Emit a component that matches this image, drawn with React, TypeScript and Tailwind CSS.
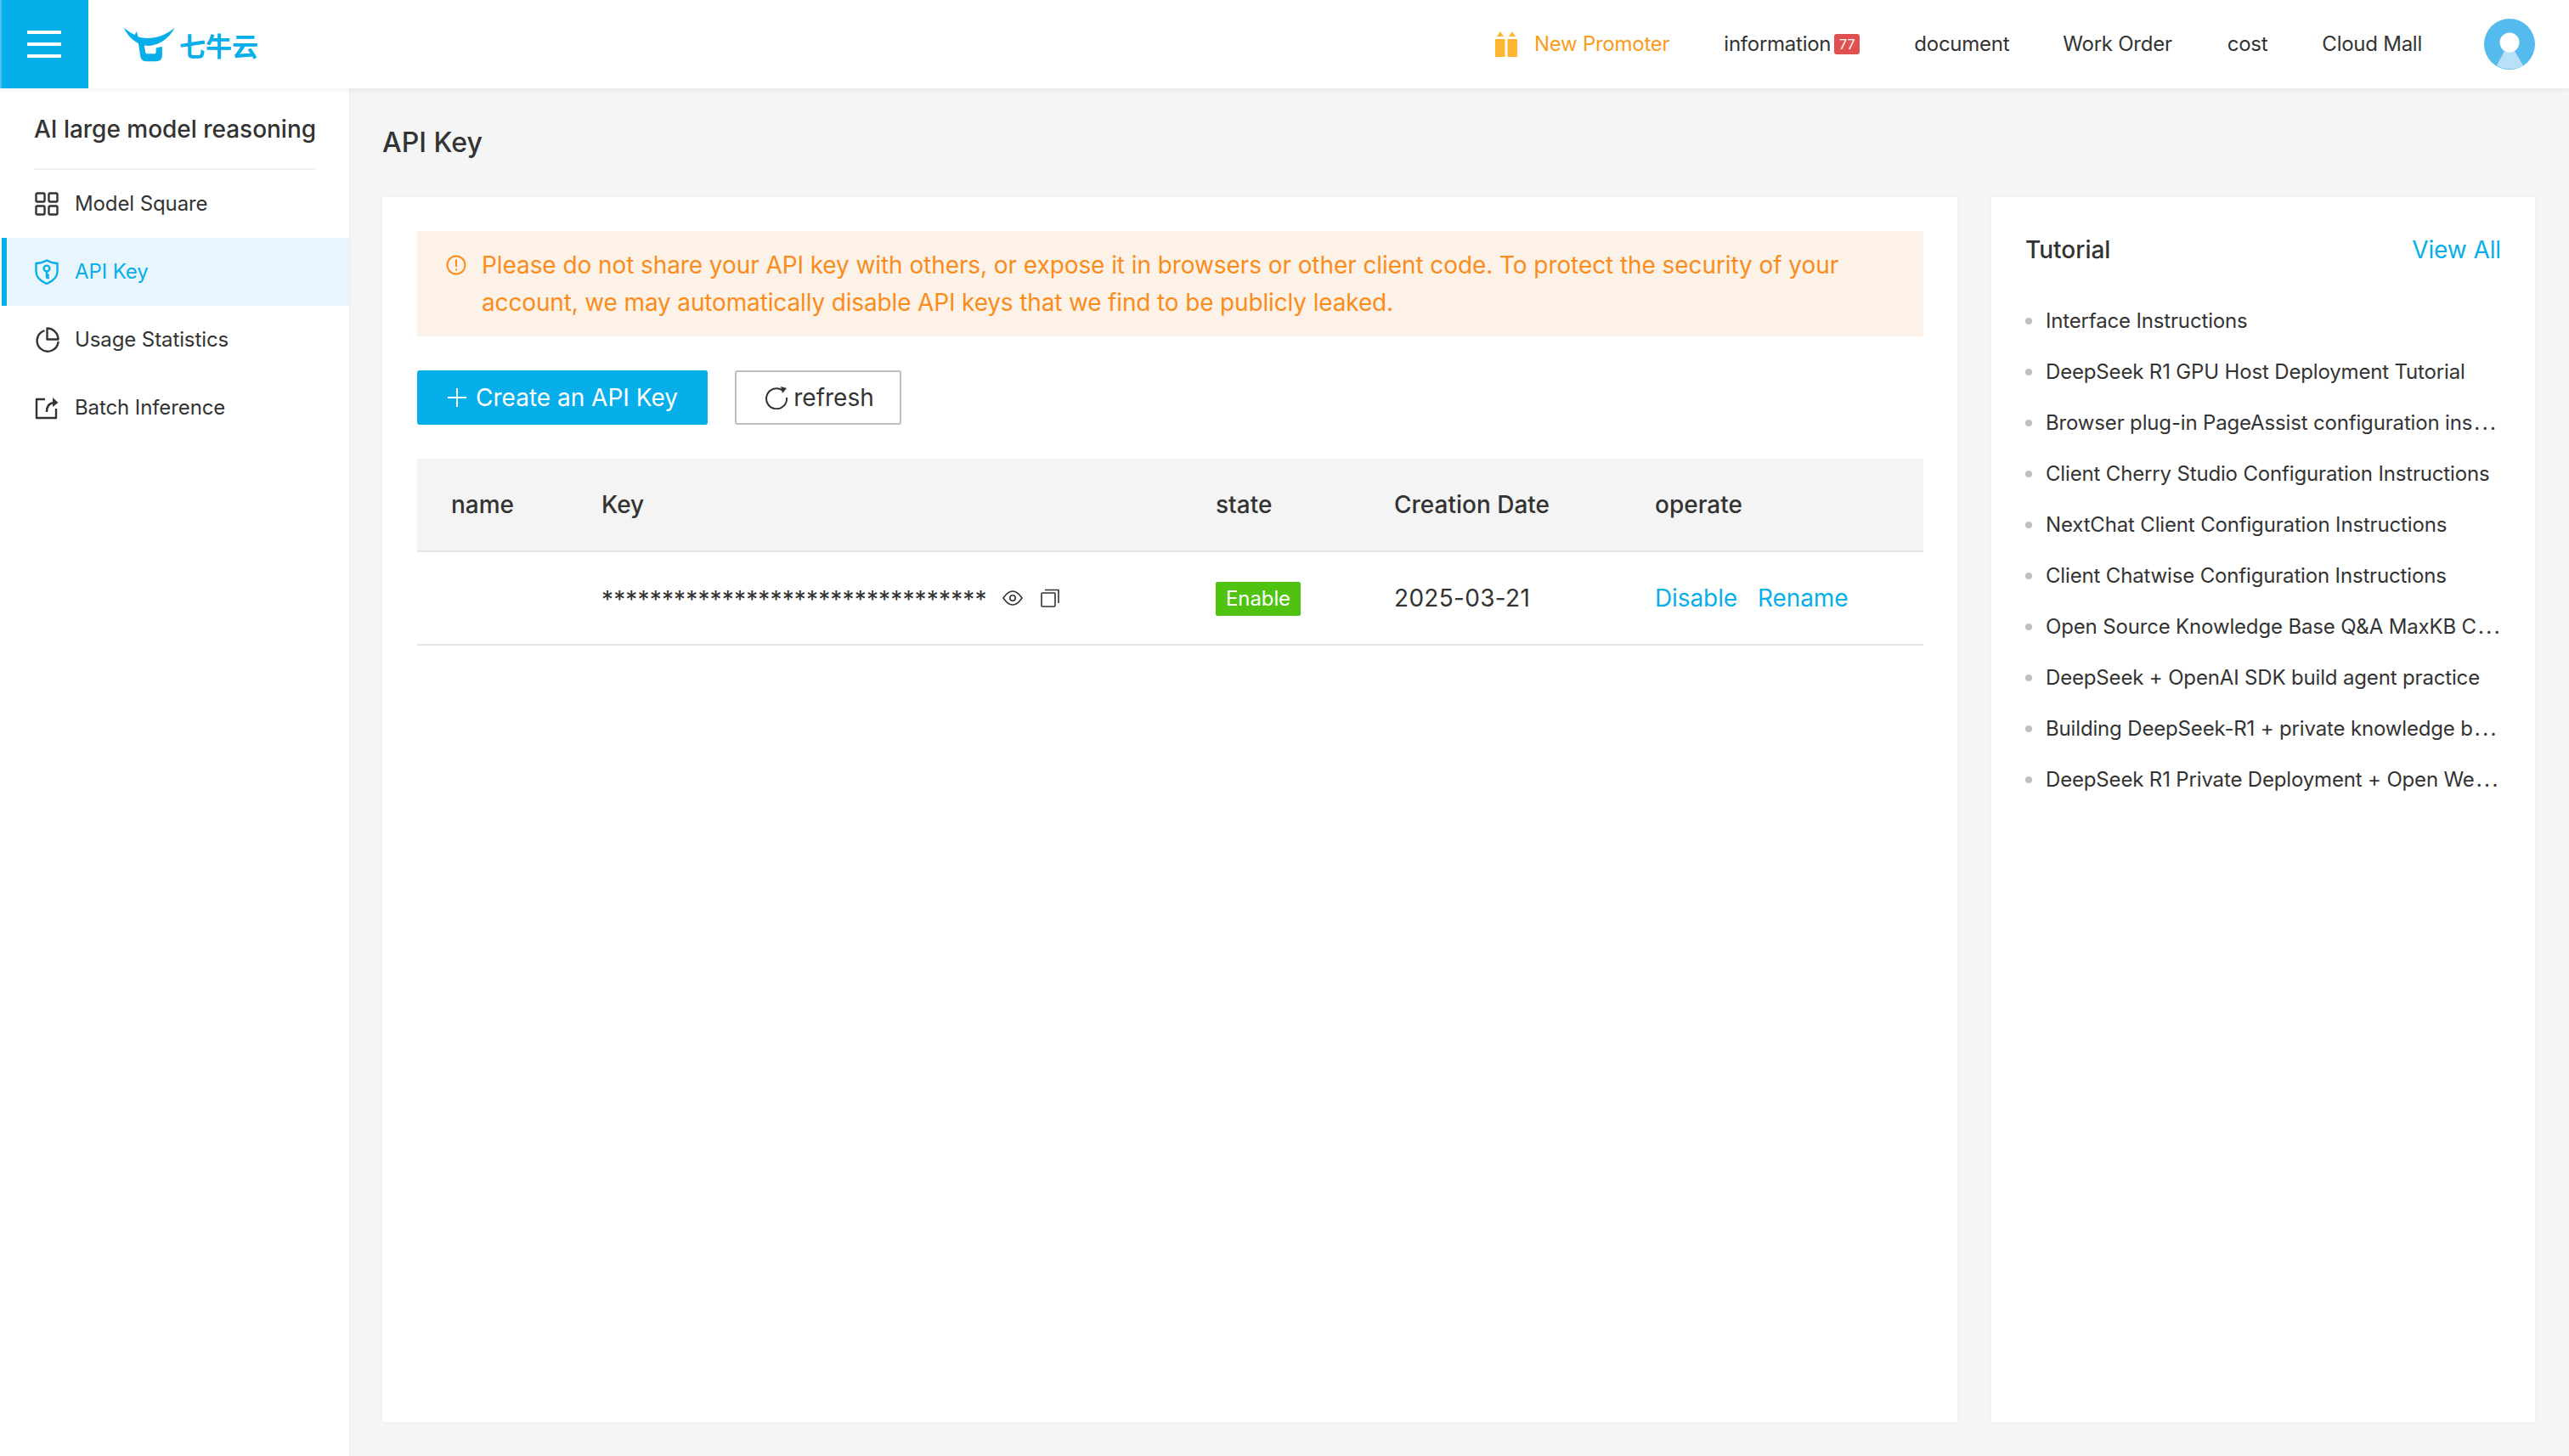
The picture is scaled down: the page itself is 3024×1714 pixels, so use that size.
import React from "react";

const font = "font-['Inter','Noto_Sans_CJK_SC',sans-serif]";

function Logo() {
  return (
    <div className="ml-[39px] flex items-end">
      <svg width="66" height="45" viewBox="430 85 200 135" className="shrink-0">
        <path fill="#06aeea" d="M438 92C452 104 465 112 478 118L483 105L490 125C520 134 575 132 620 92C600 130 570 152 530 157C490 158 455 130 438 92Z" />
        <path fill="#06aeea" d="M490 145L497 192C499 205 505 212 518 212L552 212C567 212 575 205 575 192L575 160C568 160 560 163 553 165L553 178C553 183 551 185 546 185L522 185C518 185 516 183 515 178L511 150Z" />
      </svg>
      <span className="mb-[2px] ml-[2px] text-[31px] leading-[40px] font-bold text-[#06aeea] font-['Noto_Sans_CJK_SC',sans-serif]">七牛云</span>
    </div>
  );
}

function Gift() {
  return (
    <svg width="26" height="30" viewBox="0 0 26 30" className="shrink-0">
      <path fill="#ffb62e" d="M0 9V30H11.5V9ZM14.5 9V30H26V9ZM2 6L6 0L10 6ZM16 6L20 0L24 6Z" />
    </svg>
  );
}

function Avatar() {
  return (
    <svg width="60" height="60" viewBox="0 0 60 60" className="shrink-0">
      <circle cx="30" cy="30" r="30" fill="#55bbef" />
      <path fill="#b8e0f7" d="M24 38H36L46 55A30 30 0 0 1 15 55Z" />
      <circle cx="30" cy="28" r="11.5" fill="#ffffff" />
    </svg>
  );
}

function Nav({ children, className }: { children: React.ReactNode; className: string }) {
  return <span className={`text-[24px] leading-[32px] tracking-[-0.25px] text-[#333] ${className}`}>{children}</span>;
}

function Header() {
  return (
    <header className="relative z-10 flex h-[104px] shrink-0 items-center bg-white shadow-[0_2px_6px_rgba(0,0,0,0.06)]">
      <div className="flex h-[104px] w-[104px] shrink-0 flex-col items-center justify-center gap-[10px] border-l-2 border-[#4dbfec] bg-[#06aeea] pr-[2px]">
        <div className="h-[4px] w-[40px] bg-white" />
        <div className="h-[4px] w-[40px] bg-white" />
        <div className="h-[4px] w-[40px] bg-white" />
      </div>
      <Logo />
      <div className="ml-auto flex items-center pr-[40px]">
        <Gift />
        <span className="ml-[20px] text-[24px] leading-[32px] tracking-[-0.25px] text-[#fa9b1b]">New Promoter</span>
        <Nav className="ml-[64px]">information</Nav>
        <span className="ml-[4px] flex h-[24px] w-[30px] items-center justify-center rounded-[3px] bg-[#e05050] text-[16px] leading-[24px] text-white">77</span>
        <Nav className="ml-[64px]">document</Nav>
        <Nav className="ml-[63px]">Work Order</Nav>
        <Nav className="ml-[65px]">cost</Nav>
        <Nav className="ml-[64px]">Cloud Mall</Nav>
        <div className="ml-[73px]"><Avatar /></div>
      </div>
    </header>
  );
}

function GridIcon() {
  return (
    <svg width="28" height="28" viewBox="0 0 28 28" fill="none" stroke="#333" strokeWidth="2.4">
      <rect x="1.5" y="1.5" width="10" height="10" rx="1.5" />
      <rect x="16.5" y="1.5" width="10" height="10" rx="1.5" />
      <rect x="1.5" y="16.5" width="10" height="10" rx="1.5" />
      <rect x="16.5" y="16.5" width="10" height="10" rx="1.5" />
    </svg>
  );
}
function ShieldIcon() {
  return (
    <svg width="28" height="30" viewBox="0 0 28 30" fill="none" stroke="#06aeea" strokeWidth="2.4">
      <path d="M14 1.5C17.5 3.5 22 5 26.5 5V15C26.5 21.5 21 26 14 29C7 26 1.5 21.5 1.5 15V5C6 5 10.5 3.5 14 1.5Z" strokeLinejoin="round" />
      <circle cx="14" cy="11" r="3.4" />
      <path d="M14 14.5V22.5M14 19H17M14 22H17" />
    </svg>
  );
}
function PieIcon() {
  return (
    <svg width="30" height="30" viewBox="0 0 30 30" fill="none" stroke="#333" strokeWidth="2.4">
      <path d="M11.5 4.5A12.5 12.5 0 1 0 28.5 18" strokeLinecap="round" />
      <path d="M15.5 1.5A13 13 0 0 1 28.5 14.5H15.5Z" strokeLinejoin="round" />
    </svg>
  );
}
function ExportIcon() {
  return (
    <svg width="28" height="28" viewBox="0 0 28 28" fill="none" stroke="#333" strokeWidth="2.4">
      <path d="M12 4H2V26H25V15" strokeLinejoin="round" />
      <path d="M14 19C14 12 17 8 24 8" />
      <path fill="#333" stroke="none" d="M21 2L27.5 8L21 13Z" />
    </svg>
  );
}

function SideItem({ icon, label, active }: { icon: React.ReactNode; label: string; active?: boolean }) {
  return (
    <div className={active ? "ml-[2px] flex h-[80px] items-center border-l-[6px] border-[#06aeea] bg-[#e9f5fc] pl-[32px]" : "flex h-[80px] items-center pl-[40px]"}>
      <span className="flex w-[30px] justify-center">{icon}</span>
      <span className={active ? "ml-[18px] text-[24px] leading-[32px] tracking-[-0.1px] text-[#06aeea]" : "ml-[18px] text-[24px] leading-[32px] tracking-[-0.1px] text-[#333]"}>{label}</span>
    </div>
  );
}

function Sidebar() {
  return (
    <aside className="w-[411px] shrink-0 bg-white shadow-[1px_0_3px_rgba(0,0,0,0.04)]">
      <div className="mx-[40px] flex h-[96px] items-center border-b-2 border-[#f0f0f0] pt-[2px]">
        <span className="text-[28px] leading-[36px] font-medium tracking-[-0.02px] whitespace-nowrap text-[#333]">AI large model reasoning</span>
      </div>
      <div>
        <SideItem icon={<GridIcon />} label="Model Square" />
        <SideItem icon={<ShieldIcon />} label="API Key" active />
        <SideItem icon={<PieIcon />} label="Usage Statistics" />
        <SideItem icon={<ExportIcon />} label="Batch Inference" />
      </div>
    </aside>
  );
}

function Alert() {
  return (
    <div className="flex bg-[#fdf2e7] px-[34px] py-[18px] text-[#fa8c1e]">
      <svg width="24" height="24" viewBox="0 0 24 24" fill="none" stroke="#fa8c1e" strokeWidth="2" className="mt-[10px] shrink-0">
        <circle cx="12" cy="12" r="10.5" />
        <path d="M12 5.5V14M12 16.5V18.5" />
      </svg>
      <p className="ml-[18px] text-[28px] leading-[44px] tracking-[-0.08px]">
        Please do not share your API key with others, or expose it in browsers or other client code. To protect the security of your
        <br />
        <span className="tracking-[-0.15px]">account, we may automatically disable API keys that we find to be publicly leaked.</span>
      </p>
    </div>
  );
}

function Actions() {
  return (
    <div className="mt-[40px] flex gap-[32px]">
      <button className="flex h-[64px] w-[342px] items-center justify-center gap-[10px] rounded-[3px] bg-[#06aeea] text-[28px] text-white">
        <svg width="24" height="24" viewBox="0 0 24 24" stroke="#fff" strokeWidth="2"><path d="M12 1V23M1 12H23" /></svg>
        Create an API Key
      </button>
      <button className="flex h-[64px] w-[196px] items-center justify-center gap-[6px] rounded-[3px] border-2 border-[#bfbfbf] bg-white pl-[3px] text-[28px] text-[#333]">
        <svg width="28" height="28" viewBox="0 0 28 28" fill="none" stroke="#333" strokeWidth="2">
          <path d="M21 5.5A12 12 0 1 0 26 14" />
          <path fill="#333" stroke="none" d="M19 1L26 3L21 9Z" />
        </svg>
        refresh
      </button>
    </div>
  );
}

function Table() {
  return (
    <div className="mt-[40px] text-[28px] text-[#333]">
      <div className="grid h-[110px] grid-cols-[177px_723px_210px_307px_1fr] items-center border-b-2 border-[#e4e4e4] bg-[#f4f4f4] pl-[40px] font-medium">
        <span>name</span>
        <span>Key</span>
        <span>state</span>
        <span>Creation Date</span>
        <span>operate</span>
      </div>
      <div className="grid h-[110px] grid-cols-[177px_723px_210px_307px_1fr] items-center border-b-2 border-[#e4e4e4] pl-[40px]">
        <span />
        <div className="flex items-center">
          <span className="w-[454px] whitespace-nowrap pt-[4px] text-[28px] leading-[36px] tracking-[0.15px]">********************************</span>
          <svg width="24" height="18" viewBox="0 0 24 18" fill="none" stroke="#333" strokeWidth="1.6" className="ml-[18px]">
            <path d="M1 9C5 3 8 1 12 1S19 3 23 9C19 15 16 17 12 17S5 15 1 9Z" strokeLinejoin="round" />
            <circle cx="12" cy="9" r="3.2" />
          </svg>
          <svg width="22" height="22" viewBox="0 0 22 22" fill="none" stroke="#333" strokeWidth="1.6" className="ml-[21px]">
            <rect x="1" y="5" width="16" height="16" rx="1" />
            <path d="M5 1.5H21V17" />
          </svg>
        </div>
        <span className="mt-[2px] flex h-[40px] w-[100px] items-center justify-center rounded-[2px] bg-[#4fc30f] text-[24px] tracking-[-0.1px] text-white">Enable</span>
        <span className="tracking-[0.3px]">2025-03-21</span>
        <div className="flex gap-[24px] tracking-[-0.1px] text-[#06aeea]">
          <span>Disable</span>
          <span>Rename</span>
        </div>
      </div>
    </div>
  );
}

const tutorials: [string, boolean][] = [
  ["Interface Instructions", false],
  ["DeepSeek R1 GPU Host Deployment Tutorial", false],
  ["Browser plug-in PageAssist configuration ins", true],
  ["Client Cherry Studio Configuration Instructions", false],
  ["NextChat Client Configuration Instructions", false],
  ["Client Chatwise Configuration Instructions", false],
  ["Open Source Knowledge Base Q&A MaxKB C", true],
  ["DeepSeek + OpenAI SDK build agent practice", false],
  ["Building DeepSeek-R1 + private knowledge b", true],
  ["DeepSeek R1 Private Deployment + Open We", true],
];

function Tutorial() {
  return (
    <section className="h-[1442px] w-[640px] shrink-0 bg-white px-[40px] pt-[42px] shadow-[0_0_6px_rgba(0,0,0,0.04)]">
      <div className="flex h-[40px] items-center justify-between text-[28px]">
        <span className="font-medium text-[#333]">Tutorial</span>
        <span className="tracking-[-0.1px] text-[#06aeea]">View All</span>
      </div>
      <ul className="mt-[34px]">
        {tutorials.map(([t, cut]) => (
          <li key={t} className="flex h-[60px] items-center">
            <span className="h-[8px] w-[8px] shrink-0 rounded-full bg-[#bfbfbf]" />
            <span className="ml-[16px] whitespace-nowrap text-[24px] tracking-[-0.16px] text-[#333]">
              {t}
              {cut ? <span className="ml-[2px] tracking-[2.5px]">...</span> : null}
            </span>
          </li>
        ))}
      </ul>
    </section>
  );
}

export default function App() {
  return (
    <div className={`flex h-[1714px] w-[3024px] flex-col overflow-hidden bg-[#f5f5f5] ${font}`}>
      <Header />
      <div className="flex flex-1">
        <Sidebar />
        <main className="flex-1 pl-[39px] pr-[40px]">
          <h1 className="flex h-[128px] items-center text-[32px] font-medium text-[#333]">API Key</h1>
          <div className="flex gap-[40px]">
            <section className="h-[1442px] w-[1854px] shrink-0 bg-white py-[40px] pl-[41px] pr-[40px] shadow-[0_0_6px_rgba(0,0,0,0.04)]">
              <Alert />
              <Actions />
              <Table />
            </section>
            <Tutorial />
          </div>
        </main>
      </div>
    </div>
  );
}
